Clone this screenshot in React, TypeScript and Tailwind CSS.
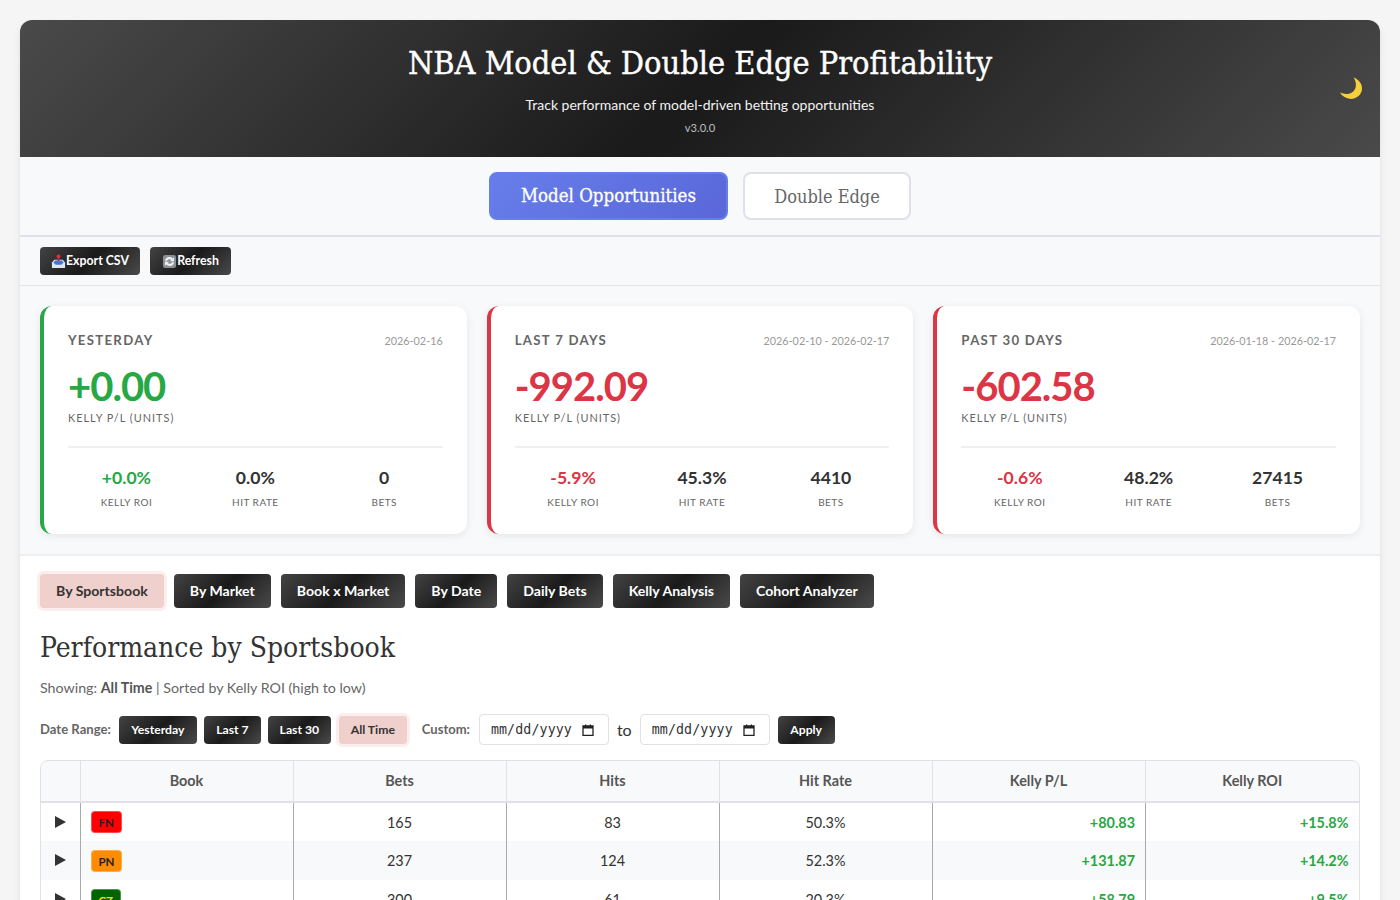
const serif = "font-['DejaVu_Serif_Condensed','DejaVu_Serif',serif]";

const summaries = [
  {
    label: "YESTERDAY",
    dates: "2026-02-16",
    pl: "+0.00",
    roi: "+0.0%",
    hitRate: "0.0%",
    bets: "0",
    positive: true,
  },
  {
    label: "LAST 7 DAYS",
    dates: "2026-02-10 - 2026-02-17",
    pl: "-992.09",
    roi: "-5.9%",
    hitRate: "45.3%",
    bets: "4410",
    positive: false,
  },
  {
    label: "PAST 30 DAYS",
    dates: "2026-01-18 - 2026-02-17",
    pl: "-602.58",
    roi: "-0.6%",
    hitRate: "48.2%",
    bets: "27415",
    positive: false,
  },
];

const subTabs = ["By Market", "Book x Market", "By Date", "Daily Bets", "Kelly Analysis", "Cohort Analyzer"];

const rows = [
  { code: "FN", badge: "bg-[#ff0000] text-[#222]", bets: 165, hits: 83, rate: "50.3%", pl: "+80.83", roi: "+15.8%" },
  { code: "PN", badge: "bg-[#ff8c00] text-[#222]", bets: 237, hits: 124, rate: "52.3%", pl: "+131.87", roi: "+14.2%" },
  { code: "CZ", badge: "bg-[#006400] text-[#ffd700]", bets: 300, hits: 61, rate: "20.3%", pl: "+58.79", roi: "+9.5%" },
];

const darkBtn = "bg-[linear-gradient(135deg,#434343_0%,#1a1a1a_50%,#4a4a4a_100%)] text-white font-bold rounded-[4px]";
const activeBtn = "bg-[#f0d0cc] text-[#333] font-bold rounded-[4px] shadow-[0_0_0_3px_#fbeeec]";

function Moon() {
  return (
    <svg viewBox="0 0 24 24" className="w-[24px] h-[24px]">
      <path d="M14.500 1.500C20 3.500 23.500 8 23 13.500 22.300 19.500 16.500 23.500 10.500 22.800 6.500 22.300 3 20 1 16.500c4.500 2.200 9.500 2 13-.8 3.800-3.200 3.800-9.600.5-14.200z" fill="#f6cf3c" />
    </svg>
  );
}

function InboxIcon() {
  return (
    <svg viewBox="0 0 16 16" className="w-[15px] h-[15px] shrink-0">
      <path d="M1 9l2.500-3h9L15 9v6H1z" fill="#dfe6ee" />
      <path d="M2.500 9l2-2h7l2 2-2.500 2.500h-6z" fill="#3f78d8" />
      <rect x="7" y="2.500" width="2" height="5" fill="#c8243a" />
      <circle cx="8" cy="2.500" r="2" fill="#e0314a" />
    </svg>
  );
}

function RefreshIcon() {
  return (
    <svg viewBox="0 0 16 16" className="w-[15px] h-[15px] shrink-0">
      <rect x="1" y="1" width="14" height="14" rx="2.500" fill="#8b8f96" />
      <path d="M3 7a5 5 0 0 1 8.500-2.300l1.300-1.200v4.300H8.500l1.600-1.500A3.200 3.200 0 0 0 5 7.500z" fill="#eef1f4" />
      <path d="M13 9a5 5 0 0 1-8.500 2.300l-1.300 1.200V8.200h4.300L5.900 9.700A3.200 3.200 0 0 0 11 8.500z" fill="#eef1f4" />
    </svg>
  );
}

function DateField() {
  return (
    <div className="w-[130px] h-[31px] flex items-center justify-between pl-[11px] pr-[14px] bg-white border border-[#e0e0e6] rounded-[4px]">
      <span className="pt-[1px] font-['DejaVu_Sans_Mono',monospace] text-[13.300px] text-[#333] tracking-[0.1px]">mm/dd/yyyy</span>
      <svg viewBox="0 0 12 12" className="w-[12px] h-[12px] shrink-0">
        <path d="M1 2h10v9.500H1z" fill="none" stroke="#222" strokeWidth="1.300" />
        <path d="M1 2h10v2.500H1zM3 .5h1.300V2H3zM7.700.5H9V2H7.700z" fill="#222" />
      </svg>
    </div>
  );
}

function Stat({ value, label, color }: { value: string; label: string; color: string }) {
  return (
    <div className="text-center">
      <div className={`text-[17.600px] leading-[22px] font-bold ${color}`}>{value}</div>
      <div className="mt-[7px] text-[10px] leading-[13px] tracking-[0.5px] text-[#666]">{label}</div>
    </div>
  );
}

function SummaryCard({ item }: { item: (typeof summaries)[number] }) {
  const color = item.positive ? "text-[#28a745]" : "text-[#dc3545]";
  return (
    <div
      className={`flex-1 bg-white rounded-[12px] border-l-4 p-[24px] h-[228px] shadow-[0_2px_8px_rgba(0,0,0,0.08)] ${
        item.positive ? "border-[#28a745]" : "border-[#dc3545]"
      }`}
    >
      <div className="flex items-center justify-between h-[20px] mt-[1px]">
        <span className="text-[13.200px] font-bold tracking-[1.300px] text-[#666]">{item.label}</span>
        <span className="text-[10.800px] text-[#999]">{item.dates}</span>
      </div>
      <div className={`mt-[11px] text-[40px] leading-[48px] font-bold tracking-[-1px] ${color}`}>{item.pl}</div>
      <div className="mt-[1px] text-[10.900px] leading-[14px] tracking-[1px] text-[#666]">KELLY P/L (UNITS)</div>
      <div className="mt-[21px] border-t-2 border-[#f0f0f0] grid grid-cols-3 gap-[12px] pt-[19px]">
        <Stat value={item.roi} label="KELLY ROI" color={color} />
        <Stat value={item.hitRate} label="HIT RATE" color="text-[#333]" />
        <Stat value={item.bets} label="BETS" color="text-[#333]" />
      </div>
    </div>
  );
}

export default function App() {
  return (
    <div className="bg-[#f5f5f5] p-[20px] font-['Lato',sans-serif] text-[#333] min-h-screen">
      <div className="bg-white rounded-[12px] shadow-[0_4px_6px_rgba(0,0,0,0.1)]">
        <header className="relative h-[137px] rounded-t-[12px] bg-[linear-gradient(135deg,#4a4a4a_0%,#1a1a1a_50%,#4a4a4a_100%)] text-center text-white pt-[21px]">
          <h1 className={`${serif} text-[32.200px] leading-[44px] font-normal [-webkit-text-stroke:0.4px_white]`}>NBA Model &amp; Double Edge Profitability</h1>
          <p className="mt-[10px] text-[14px] leading-[20px] text-[#f2f2f2]">Track performance of model-driven betting opportunities</p>
          <p className="mt-[6px] text-[11.200px] leading-[14px] text-[#bdbdbd]">v3.0.0</p>
          <div className="absolute right-[17px] top-[56px]">
            <Moon />
          </div>
        </header>

        <div className="h-[80px] bg-[#f8f9fa] border-b-2 border-[#e0e0e8] flex items-center justify-center gap-[15px]">
          <button className={`${serif} w-[239px] h-[48px] rounded-[8px] border-2 border-[#667eea] bg-[linear-gradient(135deg,#667eea,#5a67d8)] text-white text-[18.500px] font-normal [-webkit-text-stroke:0.3px_white]`}>
            Model Opportunities
          </button>
          <button className={`${serif} w-[168px] h-[48px] rounded-[8px] border-2 border-[#e0e0e8] bg-white text-[#666] text-[18px] font-normal`}>
            Double Edge
          </button>
        </div>

        <div className="h-[49px] bg-[#f8f9fa] border-b border-[#e0e4e8] flex items-center gap-[10px] pl-[20px]">
          <button className={`${darkBtn} h-[28px] w-[100px] flex items-center justify-center text-[12.300px]`}>
            <InboxIcon />
            Export CSV
          </button>
          <button className={`${darkBtn} h-[28px] w-[81px] flex items-center justify-center text-[12.300px]`}>
            <RefreshIcon />
            Refresh
          </button>
        </div>

        <div className="bg-[#f8f9fa] border-b-2 border-[#eceef0] p-[20px] flex gap-[20px]">
          {summaries.map((item) => (
            <SummaryCard key={item.label} item={item} />
          ))}
        </div>

        <div className="px-[20px] pt-[18px]">
          <div className="flex gap-[10px]">
            <button className={`${activeBtn} h-[34px] px-[16px] pb-[1px] text-[14.100px]`}>By Sportsbook</button>
            {subTabs.map((tab) => (
              <button key={tab} className={`${darkBtn} h-[34px] px-[16px] text-[14.100px]`}>
                {tab}
              </button>
            ))}
          </div>

          <h2 className={`${serif} mt-[21px] text-[28px] leading-[38px] font-normal text-[#333]`}>Performance by Sportsbook</h2>
          <p className="mt-[11px] text-[14.250px] leading-[20px] text-[#666]">
            Showing: <strong className="text-[#555]">All Time</strong> | Sorted by Kelly ROI (high to low)
          </p>

          <div className="mt-[16px] flex items-center h-[31px]">
            <span className="pt-[1px] text-[13.100px] font-bold text-[#666] mr-[8px]">Date Range:</span>
            <div className="flex gap-[7px]">
              <button className={`${darkBtn} h-[28px] w-[78px] pt-[2px] text-[12.200px]`}>Yesterday</button>
              <button className={`${darkBtn} h-[28px] w-[57px] pt-[2px] text-[12.200px]`}>Last 7</button>
              <button className={`${darkBtn} h-[28px] w-[63px] pt-[2px] text-[12.200px]`}>Last 30</button>
              <button className={`${activeBtn} ml-[1px] h-[28px] w-[68px] pt-[1px] text-[12.200px]`}>All Time</button>
            </div>
            <span className="pt-[1px] ml-[15px] mr-[9px] text-[13px] font-bold text-[#666]">Custom:</span>
            <DateField />
            <span className="mx-[8px] text-[16px] text-[#333]">to</span>
            <DateField />
            <button className={`${darkBtn} ml-[8px] h-[28px] w-[57px] pt-[2px] text-[12.200px]`}>Apply</button>
          </div>

          <div className="mt-[15px] border border-[#e0e0e6] rounded-t-[8px] overflow-hidden">
            <table className="w-full border-collapse table-fixed text-[14.400px]">
              <colgroup>
                <col className="w-[39px]" />
                <col className="w-[213px]" />
                <col className="w-[213px]" />
                <col className="w-[213px]" />
                <col className="w-[213px]" />
                <col className="w-[213px]" />
                <col className="w-[214px]" />
              </colgroup>
              <thead>
                <tr className="h-[41px] bg-[#f8f9fa] border-b-2 border-[#e0e0e6] text-[#555]">
                  <th className="border-r border-[#e0e0e6]" />
                  {["Book", "Bets", "Hits", "Hit Rate", "Kelly P/L"].map((h) => (
                    <th key={h} className="font-bold border-r border-[#e0e0e6]">
                      {h}
                    </th>
                  ))}
                  <th className="font-bold">Kelly ROI</th>
                </tr>
              </thead>
              <tbody>
                {rows.map((row, i) => (
                  <tr key={row.code} className={`h-[39px] ${i % 2 === 1 ? "bg-[#f8f9fa]" : "bg-white"}`}>
                    <td className="border-r border-[#aaa] text-center">
                      <svg viewBox="0 0 11 12" className="w-[11px] h-[12px] inline-block ml-[1px] -mt-[4px]">
                        <path d="M0 0l11 6-11 6z" fill="#333" />
                      </svg>
                    </td>
                    <td className="border-r border-[#aaa] pl-[10px]">
                      <span className={`inline-block px-[7px] h-[22px] leading-[21px] -mt-[2px] align-middle border border-white/30 rounded-[4px] text-[11.500px] font-bold ${row.badge}`}>
                        {row.code}
                      </span>
                    </td>
                    <td className="text-center border-r border-[#aaa] pt-[1px]">{row.bets}</td>
                    <td className="text-center border-r border-[#aaa] pt-[1px]">{row.hits}</td>
                    <td className="text-center border-r border-[#aaa] pt-[1px]">{row.rate}</td>
                    <td className="text-right pr-[9.500px] pt-[1px] font-bold text-[#28a745] border-r border-[#aaa]">{row.pl}</td>
                    <td className="text-right pr-[10px] pt-[1px] font-bold text-[#28a745] border-r border-[#aaa]">{row.roi}</td>
                  </tr>
                ))}
              </tbody>
            </table>
          </div>
        </div>
      </div>
    </div>
  );
}
